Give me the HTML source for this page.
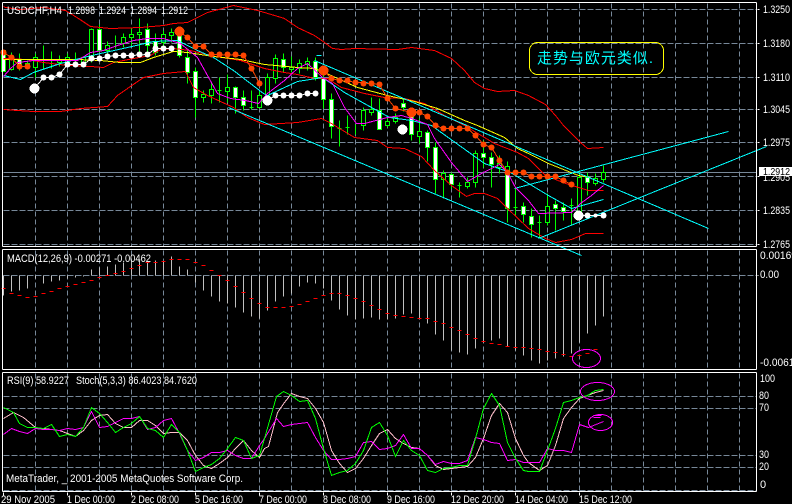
<!DOCTYPE html>
<html><head><meta charset="utf-8"><title>USDCHF,H4</title>
<style>
html,body{margin:0;padding:0;background:#000;width:792px;height:504px;overflow:hidden}
svg{display:block}
text{font-family:"Liberation Sans",sans-serif;font-size:11px;fill:#fff}
.cjk{font-family:"Liberation Sans","WenQuanYi Zen Hei","Noto Sans CJK SC",sans-serif;font-size:15px;fill:#0ff}
.b{fill:#000}
</style></head><body>
<svg width="792" height="504" viewBox="0 0 792 504" xmlns="http://www.w3.org/2000/svg">
<rect width="792" height="504" fill="#000"/>
<g transform="translate(.5 .5)" fill="none" shape-rendering="crispEdges">
<!-- grid -->
<path stroke="#778899" stroke-dasharray="6 2" d="M3 9H756M3 43H756M3 77H756M3 109H756M3 142H756M3 176H756M3 210H756M3 244H756M3 275H756M3 396H756M3 408H756M3 455H756M3 467H756M3 490H756"/>
<path stroke="#778899" stroke-dasharray="5 3" d="M35 3V246M67 3V246M99 3V246M131 3V246M163 3V246M195 3V246M227 3V246M259 3V246M291 3V246M323 3V246M355 3V246M387 3V246M419 3V246M451 3V246M483 3V246M515 3V246M547 3V246M579 3V246M611 3V246M643 3V246M675 3V246M707 3V246M739 3V246
M35 250V369M67 250V369M99 250V369M131 250V369M163 250V369M195 250V369M227 250V369M259 250V369M291 250V369M323 250V369M355 250V369M387 250V369M419 250V369M451 250V369M483 250V369M515 250V369M547 250V369M579 250V369M611 250V369M643 250V369M675 250V369M707 250V369M739 250V369
M35 373V491M67 373V491M99 373V491M131 373V491M163 373V491M195 373V491M227 373V491M259 373V491M291 373V491M323 373V491M355 373V491M387 373V491M419 373V491M451 373V491M483 373V491M515 373V491M547 373V491M579 373V491M611 373V491M643 373V491M675 373V491M707 373V491M739 373V491"/>
<path stroke="#778899" d="M3 172H756"/>
<!-- wicks -->
<path stroke="#0f0" d="M3 50V71M11 52V70M19 53V70M27 60V69M35 53V77M43 45V68M51 51V68M59 55V66M67 53V67M75 52V67M83 57V67M91 28V62M99 24V52M107 41V57M115 35V48M123 33V47M131 27V45M139 18V52M147 23V52M155 33V55M163 30V47M171 28V42M179 27V57M187 48V83M195 67V117M203 90V102M211 83V103M219 77V102M227 74V102M235 86V113M243 90V110M251 90V109M259 90V108M267 73V100M275 54V83M283 53V72M291 56V72M299 59V73M307 57V70M315 57V80M323 75V108M331 93V138M339 120V146M347 115V134M355 124V134M363 107V130M371 97V115M379 98V129M387 118V127M395 113V123M403 99V111M411 110V140M419 118V143M427 130V161M435 142V193M443 170V198M451 172V188M459 182V197M467 177V188M475 150V187M483 140V167M491 152V187M499 155V173M507 161V222M515 188V216M523 202V222M531 208V237M539 215V238M547 193V225M555 200V230M563 202V220M571 198V225M579 172V214M587 172V195M595 173V185M603 165V182"/>
<!-- white bodies -->
<path fill="#fff" stroke="#0f0" d="M1 50h4V71h-4zM17 59h4V64h-4zM97 29h4V50h-4zM145 29h4V45h-4zM153 41h4V52h-4zM177 33h4V55h-4zM185 57h4V72h-4zM193 71h4V97h-4zM233 87h4V97h-4zM241 97h4V105h-4zM281 59h4V67h-4zM313 61h4V77h-4zM321 78h4V99h-4zM329 99h4V126h-4zM377 110h4V129h-4zM401 103h4V107h-4zM409 115h4V134h-4zM425 132h4V147h-4zM433 147h4V179h-4zM449 174h4V184h-4zM481 153h4V157h-4zM489 157h4V164h-4zM505 168h4V208h-4zM521 206h4V214h-4zM529 216h4V224h-4zM553 204h4V208h-4zM561 207h4V211h-4zM585 177h4V182h-4z"/>
<!-- hollow bodies -->
<path fill="#000" stroke="#0f0" d="M9 57h4V69h-4zM25 63h4V67h-4zM33 57h4V67h-4zM57 59h4V62h-4zM65 57h4V65h-4zM81 57h4V63h-4zM89 29h4V59h-4zM105 45h4V50h-4zM121 37h4V43h-4zM129 34h4V37h-4zM137 32h4V34h-4zM161 34h4V42h-4zM169 32h4V35h-4zM201 94h4V97h-4zM209 89h4V95h-4zM225 87h4V91h-4zM257 95h4V107h-4zM265 77h4V97h-4zM273 58h4V78h-4zM289 67h4V69h-4zM297 63h4V68h-4zM305 61h4V64h-4zM361 110h4V125h-4zM369 109h4V112h-4zM385 121h4V125h-4zM393 117h4V121h-4zM417 131h4V136h-4zM441 173h4V179h-4zM465 182h4V186h-4zM473 153h4V182h-4zM497 163h4V167h-4zM505 166h4V170h-4zM545 206h4V222h-4zM577 177h4V212h-4zM593 178h4V183h-4zM601 172h4V179h-4z"/>
<path stroke="#0f0" d="M41 59h4M49 59h4M73 59h4M217 90h4M249 107h4M337 128h4M345 127h4M457 185h4M513 207h4M537 222h4M569 205h4"/>
<!-- Bollinger red -->
<path stroke="#f00" d="M3 6L5 7L20 9L43 7L65 10L78 18L90 26L110 28L140 27L163 25L173 23L187 22L207 12L233 5L257 10L264 12L284 18L297 27L314 35L324 42L332 48L341 49L354 48L397 49L411 47L434 50L451 58L464 70L474 82L484 88L497 91L514 90L528 95L545 104L555 115L563 125L580 142L587 148L603 147"/>
<path stroke="#f00" d="M3 58L27 59L43 62L67 65L90 66L103 67L113 62L133 58L150 55L160 49L173 48L190 50L215 56L240 60L264 68L284 72L297 74L314 78L327 78L341 87L364 93L384 97L404 98L424 103L444 115L464 125L494 143L517 152L528 158L545 175L565 183L588 190L603 190"/>
<path stroke="#f00" d="M3 109L17 110L33 111L60 111L80 108L107 106L117 95L127 88L143 77L163 73L185 71L193 87L207 95L233 107L247 117L264 124L297 122L321 118L331 123L339 128L354 137L377 140L387 147L404 148L421 156L434 170L451 185L466 196L474 193L484 193L497 198L507 208L528 228L545 238L555 242L571 239L585 233L603 233"/>
<!-- yellow -->
<path stroke="#ff0" d="M3 59L77 59L100 60L120 62L140 62L153 57L173 51L187 52L213 56L240 59L264 64L297 67L314 68L324 72L357 87L387 95L414 101L437 108L464 120L477 125L504 137L517 148L528 153L548 163L578 175L590 177"/>
<!-- cyan MA -->
<path stroke="#0ff" d="M3 75L20 79L33 72L60 63L83 57L100 53L127 47L153 41L177 40L197 50L213 57L233 70L263 93L267 95L284 87L297 81L322 77L344 92L389 117L411 120L431 125L484 163L510 172L528 183L548 195L571 208L603 199"/>
<!-- channel -->
<path stroke="#0ff" d="M314 60L708 228M228 107L581 255M514 188L728 131M538 238L766 146M316 55h5"/>
<!-- magenta MA -->
<path stroke="#f0f" d="M3 76L10 68L17 62L33 60L60 60L77 60L90 52L103 50L117 45L133 40L147 38L163 38L180 43L197 57L207 75L217 93L230 98L245 100L258 103L267 93L284 80L297 68L307 63L322 77L332 83L344 107L356 123L364 123L387 117L401 115L411 118L427 124L434 138L451 162L467 181L481 173L499 164L507 172L515 187L528 200L538 213L571 212L580 203L591 195L603 185"/>
<!-- orange dots -->
<path stroke="#ff4500" d="M3 52L11 57L19 66L27 66M179 31L187 37L195 46L203 46L211 54L243 55L251 68L259 83M323 70L331 78L339 80L379 84L387 98L395 108L411 112L419 112L427 116L435 125L443 128L467 128L475 135L483 144L491 147L499 160L507 172L523 172L531 176L555 176L563 180L571 184"/>
<g fill="#ff4500"><circle cx="3" cy="52" r="3"/><circle cx="11" cy="57" r="3"/><circle cx="19" cy="66" r="3"/><circle cx="27" cy="66" r="3"/><circle cx="179" cy="31" r="5"/><circle cx="187" cy="37" r="3"/><circle cx="195" cy="46" r="3"/><circle cx="203" cy="46" r="3"/><circle cx="211" cy="54" r="3"/><circle cx="219" cy="54" r="3"/><circle cx="227" cy="54" r="3"/><circle cx="235" cy="54" r="3"/><circle cx="243" cy="55" r="3"/><circle cx="251" cy="68" r="3"/><circle cx="259" cy="83" r="3"/><circle cx="323" cy="70" r="5"/><circle cx="331" cy="78" r="3"/><circle cx="339" cy="80" r="3"/><circle cx="347" cy="80" r="3"/><circle cx="355" cy="82" r="3"/><circle cx="363" cy="83" r="3"/><circle cx="371" cy="83" r="3"/><circle cx="379" cy="84" r="3"/><circle cx="387" cy="98" r="3"/><circle cx="395" cy="108" r="3"/><circle cx="411" cy="112" r="5"/><circle cx="419" cy="112" r="3"/><circle cx="427" cy="116" r="3"/><circle cx="435" cy="125" r="3"/><circle cx="443" cy="128" r="3"/><circle cx="451" cy="128" r="3"/><circle cx="459" cy="128" r="3"/><circle cx="467" cy="128" r="3"/><circle cx="475" cy="135" r="3"/><circle cx="483" cy="144" r="3"/><circle cx="491" cy="147" r="3"/><circle cx="499" cy="160" r="3"/><circle cx="507" cy="172" r="3"/><circle cx="515" cy="172" r="3"/><circle cx="523" cy="172" r="3"/><circle cx="531" cy="176" r="3"/><circle cx="539" cy="176" r="3"/><circle cx="547" cy="176" r="3"/><circle cx="555" cy="176" r="3"/><circle cx="563" cy="180" r="3"/><circle cx="571" cy="184" r="3"/></g>
<!-- white dots -->
<path stroke="#fff" d="M34 88L43 77L51 77L59 74L67 64L83 64L91 58L99 58L107 56L115 55L131 55L147 54L155 48L171 48M267 100L275 95L299 95L307 93L315 93M578 215L603 215"/>
<g fill="#fff"><circle cx="34" cy="88" r="5"/><circle cx="43" cy="77" r="3"/><circle cx="51" cy="77" r="3"/><circle cx="59" cy="74" r="3"/><circle cx="67" cy="64" r="3"/><circle cx="75" cy="64" r="3"/><circle cx="83" cy="64" r="3"/><circle cx="91" cy="58" r="3"/><circle cx="99" cy="58" r="3"/><circle cx="107" cy="56" r="3"/><circle cx="115" cy="55" r="3"/><circle cx="123" cy="55" r="3"/><circle cx="131" cy="55" r="3"/><circle cx="139" cy="54" r="3"/><circle cx="147" cy="54" r="3"/><circle cx="155" cy="48" r="3"/><circle cx="163" cy="48" r="3"/><circle cx="171" cy="48" r="3"/><circle cx="267" cy="100" r="5"/><circle cx="275" cy="95" r="3"/><circle cx="283" cy="95" r="3"/><circle cx="291" cy="95" r="3"/><circle cx="299" cy="95" r="3"/><circle cx="307" cy="93" r="3"/><circle cx="315" cy="93" r="3"/><circle cx="402" cy="129" r="5"/><circle cx="578" cy="215" r="5"/><circle cx="587" cy="215" r="3"/><circle cx="595" cy="215" r="2"/><circle cx="603" cy="215" r="3"/></g>
<!-- note box -->
<rect x="529" y="42" width="134" height="32" rx="8" ry="8" stroke="#ff0"/>
<!-- MACD bars -->
<path stroke="#c0c0c0" d="M3 275V295M11 275V291M19 275V290M27 275V288M35 275V278M43 275V283M51 275V281M59 275V280M67 275V278M75 275V277M83 275V276M91 275V269M99 275V267M107 275V266M115 275V264M123 275V262M131 275V261M139 275V260M147 275V261M155 275V260M163 275V261M171 275V256M179 275V266M187 275V269M195 275V282M203 275V290M211 275V296M219 275V301M227 275V303M235 275V307M243 275V312M251 275V316M259 275V318M267 275V310M275 275V301M283 275V296M291 275V293M299 275V286M307 275V282M315 275V283M323 275V288M331 275V300M339 275V309M347 275V315M355 275V319M363 275V318M371 275V317M379 275V319M387 275V319M395 275V318M403 275V314M411 275V313M419 275V319M427 275V323M435 275V334M443 275V340M451 275V350M459 275V352M467 275V354M475 275V348M483 275V342M491 275V340M499 275V338M507 275V346M515 275V350M523 275V355M531 275V360M539 275V363M547 275V360M555 275V358M563 275V356M571 275V353M579 275V342M587 275V333M595 275V325M603 275V316"/>
<!-- MACD signal -->
<path stroke="#f00" d="M1 288h4M9 293h4M17 295h4M25 297h4M33 296h4M41 293h4M49 291h4M57 288h4M65 286h4M73 284h4M81 282h4M89 280h4M97 277h4M105 275h4M113 273h4M121 271h4M129 268h4M137 265h4M145 262h4M153 262h4M161 261h4M169 259h4M177 259h4M185 259h4M193 262h4M201 265h4M209 270h4M217 275h4M225 280h4M233 286h4M241 292h4M249 298h4M257 303h4M265 307h4M273 307h4M281 307h4M289 306h4M297 304h4M305 301h4M313 298h4M321 295h4M329 293h4M337 293h4M345 295h4M353 298h4M361 301h4M369 305h4M377 309h4M385 313h4M393 315h4M401 316h4M409 317h4M417 318h4M425 318h4M433 321h4M441 323h4M449 327h4M457 330h4M465 334h4M473 338h4M481 341h4M489 343h4M497 344h4M505 346h4M513 347h4M521 347h4M529 348h4M537 349h4M545 351h4M553 352h4M561 354h4M569 356h4M577 355h4M585 353h4M593 349h4"/>
<ellipse cx="586" cy="358" rx="14" ry="9" stroke="#f0f"/>
<!-- RSI panel lines -->
<polyline stroke="#ffc0cb" points="3,418 13,412 23,417 35,427 43,428 59,430 75,436 83,430 91,420 99,415 107,414 115,423 123,427 131,427 139,420 147,420 155,425 163,433 171,432 179,432 187,440 195,455 203,465 211,468 219,463 227,457 235,448 243,440 251,450 259,457 264,448 268,446 277,412 284,402 291,393 299,396 307,398 315,408 323,422 331,450 339,463 347,472 355,468 363,458 371,445 379,433 387,429 395,438 403,443 411,447 419,448 427,455 435,465 443,469 451,468 459,467 467,466 475,457 483,438 491,415 499,403 507,412 515,438 523,455 528,462 539,470 547,465 555,445 563,418 571,407 579,398 587,395 595,392 603,390"/>
<polyline stroke="#f0f" points="3,434 11,428 19,431 27,433 35,428 43,429 51,429 59,430 67,428 75,429 83,427 91,411 99,427 107,426 115,422 123,418 131,418 139,416 147,429 155,427 163,420 171,418 179,433 187,450 195,460 203,457 211,452 219,452 227,450 235,455 243,458 251,458 259,445 264,438 276,418 283,426 291,424 299,423 307,422 315,437 323,450 331,459 339,459 347,458 355,456 363,442 371,441 379,449 387,448 395,445 403,434 411,448 419,448 427,455 435,464 443,461 451,463 459,463 467,460 475,437 483,439 491,442 499,443 507,460 515,459 523,462 528,462 539,462 547,448 555,450 563,450 571,452 579,424 588,427 603,421"/>
<polyline stroke="#0f0" points="3,407 13,412 19,423 27,427 35,427 43,428 51,424 59,436 67,434 75,436 83,427 91,407 99,413 107,422 115,432 123,427 131,423 139,416 147,428 155,430 163,437 171,424 179,432 187,450 195,471 203,467 211,464 219,458 227,448 235,437 243,440 251,458 259,455 264,438 276,396 283,391 291,395 299,401 307,400 315,418 323,448 331,475 339,472 347,470 355,463 363,450 371,427 379,422 387,435 395,456 403,440 411,450 419,455 427,470 435,472 443,468 451,467 459,465 467,465 475,438 483,408 491,393 499,405 507,442 515,458 523,470 528,471 539,471 547,450 555,428 563,402 571,400 579,397 587,395 595,390 603,389"/>
<ellipse cx="597" cy="391" rx="17" ry="9" stroke="#f0f"/>
<ellipse cx="600" cy="422" rx="12" ry="8" stroke="#f0f"/>
<path stroke="#f0f" d="M593 417h7M593 415h8"/>
<!-- frame -->
<path stroke="#fff" d="M2 2H756M2 2V246M2 246H756M2 249H756M2 249V369M2 369H756M2 372H756M2 372V491M2 491H756M756 2V246M756 249V369M756 372V491"/>
<path stroke="#fff" d="M757 9h2M757 43h2M757 77h2M757 109h2M757 142h2M757 176h2M757 210h2M757 244h2M757 275h1M3 492v3M67 492v3M131 492v3M195 492v3M259 492v3M323 492v3M387 492v3M451 492v3M515 492v3M579 492v3"/>
</g>
<!-- price box -->
<text x="763" y="181" textLength="27" lengthAdjust="spacingAndGlyphs">1.2905</text>
<rect x="759" y="167" width="33" height="9" fill="#fff"/>
<text x="763" y="175" textLength="27" lengthAdjust="spacingAndGlyphs" style="fill:#000;font-size:10px">1.2912</text>
<!-- axis labels -->
<g>
<text x="763" y="13" textLength="27" lengthAdjust="spacingAndGlyphs">1.3250</text>
<text x="763" y="47" textLength="27" lengthAdjust="spacingAndGlyphs">1.3180</text>
<text x="763" y="81" textLength="27" lengthAdjust="spacingAndGlyphs">1.3110</text>
<text x="763" y="113" textLength="27" lengthAdjust="spacingAndGlyphs">1.3045</text>
<text x="763" y="146" textLength="27" lengthAdjust="spacingAndGlyphs">1.2975</text>
<text x="763" y="214" textLength="27" lengthAdjust="spacingAndGlyphs">1.2835</text>
<text x="763" y="248" textLength="27" lengthAdjust="spacingAndGlyphs">1.2765</text>
<text x="760" y="259" textLength="37" lengthAdjust="spacingAndGlyphs">0.00169</text>
<text x="760" y="278" textLength="19" lengthAdjust="spacingAndGlyphs">0.00</text>
<text x="760" y="366" textLength="40" lengthAdjust="spacingAndGlyphs">-0.00618</text>
<text x="760" y="382" textLength="15" lengthAdjust="spacingAndGlyphs">100</text>
<text x="759" y="399" textLength="10" lengthAdjust="spacingAndGlyphs">80</text>
<text x="759" y="411" textLength="10" lengthAdjust="spacingAndGlyphs">70</text>
<text x="759" y="458" textLength="10" lengthAdjust="spacingAndGlyphs">30</text>
<text x="759" y="470" textLength="10" lengthAdjust="spacingAndGlyphs">20</text>
<text x="760" y="488">0</text>
</g>
<!-- headers -->
<text x="7" y="14" textLength="55" lengthAdjust="spacingAndGlyphs">USDCHF,H4</text>
<text x="68" y="14" textLength="27" lengthAdjust="spacingAndGlyphs">1.2898</text>
<text x="99" y="14" textLength="27" lengthAdjust="spacingAndGlyphs">1.2924</text>
<text x="130" y="14" textLength="27" lengthAdjust="spacingAndGlyphs">1.2894</text>
<text x="161" y="14" textLength="27" lengthAdjust="spacingAndGlyphs">1.2912</text>
<text x="7" y="262" textLength="144" lengthAdjust="spacingAndGlyphs">MACD(12,26,9) -0.00271 -0.00462</text>
<text x="7" y="384" textLength="62" lengthAdjust="spacingAndGlyphs">RSI(9) 58.9227</text>
<text x="76" y="384" textLength="121" lengthAdjust="spacingAndGlyphs">Stoch(5,3,3) 86.4023 84.7620</text>
<text x="6" y="482" textLength="237" lengthAdjust="spacingAndGlyphs">MetaTrader, _ 2001-2005 MetaQuotes Software Corp.</text>
<!-- time axis -->
<text x="1" y="503" textLength="54" lengthAdjust="spacingAndGlyphs">29 Nov 2005</text>
<text x="67" y="503" textLength="48" lengthAdjust="spacingAndGlyphs">1 Dec 00:00</text>
<text x="131" y="503" textLength="48" lengthAdjust="spacingAndGlyphs">2 Dec 08:00</text>
<text x="195" y="503" textLength="48" lengthAdjust="spacingAndGlyphs">5 Dec 16:00</text>
<text x="259" y="503" textLength="48" lengthAdjust="spacingAndGlyphs">7 Dec 00:00</text>
<text x="323" y="503" textLength="48" lengthAdjust="spacingAndGlyphs">8 Dec 08:00</text>
<text x="387" y="503" textLength="48" lengthAdjust="spacingAndGlyphs">9 Dec 16:00</text>
<text x="451" y="503" textLength="53" lengthAdjust="spacingAndGlyphs">12 Dec 20:00</text>
<text x="515" y="503" textLength="53" lengthAdjust="spacingAndGlyphs">14 Dec 04:00</text>
<text x="579" y="503" textLength="53" lengthAdjust="spacingAndGlyphs">15 Dec 12:00</text>
<!-- note -->
<text class="cjk" x="537" y="63" textLength="116">走势与欧元类似.</text>
</svg>
</body></html>
